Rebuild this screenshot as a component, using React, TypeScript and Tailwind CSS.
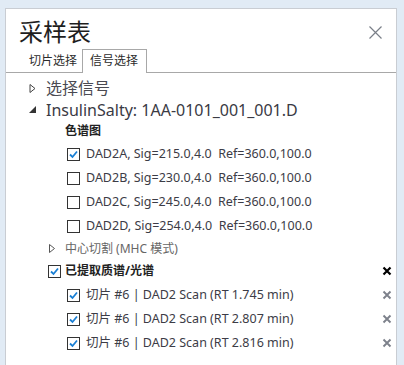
import React from "react";

const font = { fontFamily: '"Noto Sans", "Noto Sans CJK SC", sans-serif' };

function Box({ checked }: { checked?: boolean }) {
  return (
    <span className="flex h-[13px] w-[13px] shrink-0 items-center justify-center border border-[#333] bg-white">
      {checked && (
        <svg width="11" height="11" viewBox="0 0 11 11">
          <path d="M2 5.5 L4.5 8 L9 2.5" fill="none" stroke="#1a7fd4" strokeWidth="1.8" />
        </svg>
      )}
    </span>
  );
}

function Cross({ dark }: { dark?: boolean }) {
  return (
    <svg width="10" height="10" viewBox="0 0 10 10" className="mr-[4px]">
      <path d="M1.5 1.5 L8.5 8.5 M8.5 1.5 L1.5 8.5" stroke={dark ? "#000" : "#7d818b"} strokeWidth={dark ? 2.2 : 1.9} />
    </svg>
  );
}

const channels = [
  { id: "A", sig: "215.0", on: true },
  { id: "B", sig: "230.0" },
  { id: "C", sig: "245.0" },
  { id: "D", sig: "254.0" },
];

const scans = ["1.745", "2.807", "2.816"];

export default function App() {
  return (
    <div className="h-[365px] w-[404px] overflow-hidden bg-[#e1ebf5] pl-[5px] pr-[7px] pt-[8px]" style={font}>
      <div className="flex h-full flex-col border-x border-t border-[#c9cdd3] bg-white">
        <div className="flex items-center justify-between pl-[13px] pr-[14px] pt-[8px]">
          <span className="text-[24px] leading-[30px] text-[#1e1e1e]">采样表</span>
          <svg width="13" height="13" viewBox="0 0 13 13">
            <path d="M0.5 0.5 L12.5 12.5 M12.5 0.5 L0.5 12.5" stroke="#7a7f88" strokeWidth="1.2" />
          </svg>
        </div>
        <div className="mt-[2px] flex items-end border-b border-[#a8a8a8] pl-[22px] text-[12px] text-[#2b2b2b]">
          <span className="pb-[2px] pl-[1px] pr-[5px] leading-[18px]">切片选择</span>
          <span className="-mb-px border-x border-t border-[#a8a8a8] bg-white pb-[3px] pl-[7px] pr-[8px] pt-[2px] leading-[18px]">
            信号选择
          </span>
        </div>
        <div className="flex flex-col pt-[4px] text-[#3c3c46]">
          <div className="flex h-[22px] items-center pl-[23px]">
            <svg width="7" height="9" viewBox="0 0 7 9" className="mr-[10px]">
              <path d="M1 0.5 L6 4.5 L1 8.5 Z" fill="none" stroke="#444" />
            </svg>
            <span className="text-[16px] text-[#4a4a52]">选择信号</span>
          </div>
          <div className="flex h-[21px] items-center pl-[23px]">
            <svg width="7" height="7" viewBox="0 0 7 7" className="mr-[10px]">
              <path d="M7 0 L7 7 L0 7 Z" fill="#333" />
            </svg>
            <span className="text-[16px] text-[#3a3a44]">InsulinSalty: 1AA-0101_001_001.D</span>
          </div>
          <div className="flex h-[22px] items-center pl-[59px] text-[12px] font-bold text-[#222]">色谱图</div>
          {channels.map((c) => (
            <div key={c.id} className="flex h-[24px] items-center pl-[61px] text-[12.5px]">
              <Box checked={c.on} />
              <span className="ml-[6px] whitespace-pre">
                DAD2{c.id}, Sig={c.sig},4.0  Ref=360.0,100.0
              </span>
            </div>
          ))}
          <div className="flex h-[21px] items-center pl-[43px] text-[12px] text-[#666]">
            <svg width="6" height="9" viewBox="0 0 6 9" className="mr-[10px]">
              <path d="M0.5 0.5 L5.5 4.5 L0.5 8.5 Z" fill="none" stroke="#555" />
            </svg>
            中心切割 (MHC 模式)
          </div>
          <div className="flex h-[24px] items-center justify-between pl-[42px]">
            <div className="flex items-center">
              <Box checked />
              <span className="ml-[4px] text-[12px] font-bold text-[#222]">已提取质谱/光谱</span>
            </div>
            <Cross dark />
          </div>
          {scans.map((rt) => (
            <div key={rt} className="flex h-[24px] items-center justify-between pl-[61px]">
              <div className="flex items-center">
                <Box checked />
                <span className="ml-[6px] text-[12.5px]">切片 #6 | DAD2 Scan (RT {rt} min)</span>
              </div>
              <Cross />
            </div>
          ))}
        </div>
      </div>
    </div>
  );
}
